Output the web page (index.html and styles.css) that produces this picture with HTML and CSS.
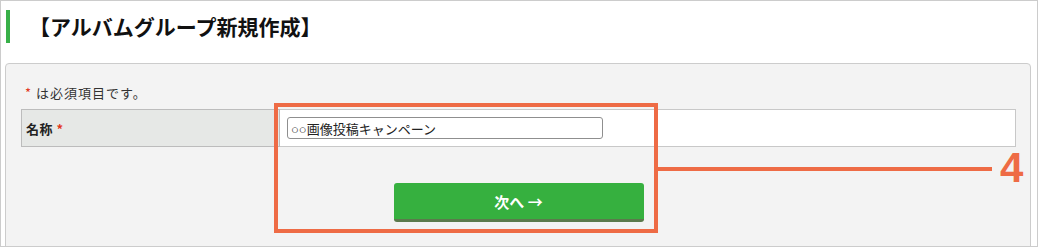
FILE: index.html
```html
<!DOCTYPE html>
<html lang="ja">
<head>
<meta charset="utf-8">
<link rel="stylesheet" href="styles.css">
</head>
<body>
<div class="page">
  <h1 class="title">【アルバムグループ新規作成】</h1>
  <div class="panel">
    <p class="note"><span class="req">*</span> は必須項目です。</p>
    <table class="form">
      <tr>
        <th class="label">名称 <span class="req">*</span></th>
        <td class="field"><input class="text" type="text" value="○○画像投稿キャンペーン"></td>
      </tr>
    </table>
    <div class="actions"><button class="next" type="button">次へ →</button></div>
  </div>
  <div class="callout"></div>
  <div class="leader"></div>
  <div class="num">4</div>
</div>
</body>
</html>
```

FILE: styles.css
```css
html, body {
  margin: 0;
  padding: 0;
  background: #fff;
}
.page {
  position: relative;
  width: 1038px;
  height: 247px;
  box-sizing: border-box;
  border: 1px solid #cccccc;
  overflow: hidden;
  font-family: "Noto Sans CJK JP", "Noto Sans", sans-serif;
  color: #222;
}
.title {
  margin: 9px 0 0 5px;
  border-left: 4px solid #38b048;
  padding-left: 19px;
  height: 33px;
  line-height: 33px;
  font-size: 21px;
  font-weight: bold;
  color: #111;
}
.panel {
  margin: 20px 6px 0 4px;
  border: 1px solid #cccccc;
  border-radius: 4px;
  background: #f3f3f3;
  padding: 21px 14px 40px 15px;
}
.note {
  margin: 0 0 8px 0;
  padding-left: 4px;
  font-size: 13px;
  letter-spacing: 1px;
  line-height: 16px;
  color: #333;
}
.req {
  color: #e2371f;
}
.form {
  width: 100%;
  border-collapse: collapse;
}
.label {
  width: 253px;
  height: 36px;
  padding: 0 0 0 4px;
  text-align: left;
  background: #e6e8e6;
  border: 1px solid #bcbcbc;
  font-size: 13px;
  font-weight: bold;
  letter-spacing: 0.5px;
  color: #222;
}
.field {
  padding: 0 0 0 7px;
  background: #fff;
  border: 1px solid #c8c8c8;
  vertical-align: middle;
}
.text {
  display: block;
  width: 316px;
  height: 22px;
  box-sizing: border-box;
  border: 1px solid #8f8f8f;
  border-radius: 3px;
  padding: 0 3px;
  font-family: "Liberation Sans", "Noto Sans CJK JP", sans-serif;
  font-size: 13px;
  color: #222;
  background: #fff;
}
.actions {
  display: flex;
  justify-content: center;
  margin-top: 36px;
}
.next {
  width: 250px;
  height: 39px;
  border: 0;
  border-bottom: 3px solid #5b7a4c;
  border-radius: 3px;
  background: #36b03f;
  color: #fff;
  font-family: "Noto Sans CJK JP", sans-serif;
  font-size: 15px;
  font-weight: bold;
  padding: 0;
}
.callout {
  position: absolute;
  left: 273px;
  top: 102px;
  width: 384px;
  height: 130px;
  box-sizing: border-box;
  border: 4px solid #ee6b45;
}
.leader {
  position: absolute;
  left: 657px;
  top: 166px;
  width: 334px;
  height: 4px;
  background: #ee6b45;
}
.num {
  position: absolute;
  left: 999px;
  top: 146px;
  font-family: "Liberation Sans", sans-serif;
  font-weight: bold;
  font-size: 42px;
  line-height: 1;
  color: #ee6b45;
}
```
